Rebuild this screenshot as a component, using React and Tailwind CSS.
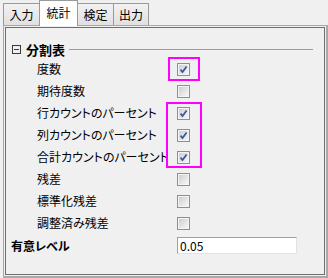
import React from 'react';

const rows = [
  { label: '度数', checked: true },
  { label: '期待度数', checked: false },
  { label: '行カウントのパーセント', checked: true },
  { label: '列カウントのパーセント', checked: true },
  { label: '合計カウントのパーセント', checked: true },
  { label: '残差', checked: false },
  { label: '標準化残差', checked: false },
  { label: '調整済み残差', checked: false },
];

const tabs = [
  { label: '入力', w: 'w-[37px]' },
  { label: '統計', w: 'w-[39px]', active: true },
  { label: '検定', w: 'w-[37px]' },
  { label: '出力', w: 'w-[36px]' },
];

function CheckBox({ checked }) {
  return (
    <div className="w-[13px] h-[13px] border border-[#8f8f8f] bg-[#f4f4f4] p-px">
      <div className="w-full h-full bg-gradient-to-br from-[#cfcfcf] to-[#f6f6f6] relative">
        {checked && (
          <svg width="9" height="9" viewBox="0 0 9 9" className="absolute left-0 top-0">
            <path d="M1.5 4.6 L3.5 7 L7.6 1.4" fill="none" stroke="#3b5998" strokeWidth="1.7" />
          </svg>
        )}
      </div>
    </div>
  );
}

export default function App() {
  return (
    <div
      className="w-[328px] h-[278px] bg-[#f0f0f0] relative overflow-hidden text-[12px] text-black"
      style={{ fontFamily: '"Noto Sans CJK JP", "Noto Sans", sans-serif' }}
    >
      {/* Tabs */}
      <div className="flex items-end h-[25px] pl-[3px]">
        {tabs.map((t, i) => (
          <div
            key={t.label}
            className={
              t.active
                ? `${t.w} h-[26px] -mb-px -ml-px relative z-10 bg-white border border-b-0 border-[#9a9a9a] flex items-center justify-center leading-none pb-[2px]`
                : `${t.w} h-[22px] ${i > 0 ? '-ml-px' : ''} bg-gradient-to-b from-[#f2f2f2] to-[#e0e0e0] border border-b-0 border-[#9a9a9a] flex items-center justify-center leading-none`
            }
          >
            {t.label}
          </div>
        ))}
      </div>

      {/* Panel */}
      <div className="ml-[3px] w-[325px] h-[253px] border-l border-t border-r-2 border-b-2 border-[#a8a8a8] p-px">
        <div className="w-full h-full border border-[#6e6e6e] relative [font-feature-settings:'palt']">
          {/* Group header */}
          <div className="flex items-center h-[18px] mt-[12px] pl-[6px] pr-[11px]">
            <div className="w-[9px] h-[9px] border border-[#3a3a3a] flex items-center justify-center">
              <div className="w-[5px] h-px bg-[#3a3a3a]" />
            </div>
            <span className="ml-[5px] font-bold text-[13px] leading-none">分割表</span>
            <div className="flex-1 h-px bg-[#9c9c9c] ml-[4px]" />
          </div>

          {rows.map((r) => (
            <div key={r.label} className="flex items-center h-[22px] pl-[31px]">
              <span className="w-[140px] leading-none whitespace-nowrap">{r.label}</span>
              <CheckBox checked={r.checked} />
            </div>
          ))}

          <div className="flex items-center mt-[3px] pl-[5px]">
            <span className="w-[166px] font-bold leading-none">有意レベル</span>
            <div className="w-[120px] h-[17px] bg-white border-t border-l border-[#a0a0a0] border-r border-b border-r-[#e3e3e3] border-b-[#e3e3e3] flex items-center pl-[2px] leading-none">
              0.05
            </div>
          </div>
        </div>
      </div>

      {/* Highlight annotations */}
      <div className="absolute left-[168px] top-[57px] w-[32px] h-[24px] border-2 border-[#ff00ff]" />
      <div className="absolute left-[166px] top-[102px] w-[36px] h-[66px] border-2 border-[#ff00ff]" />
    </div>
  );
}
